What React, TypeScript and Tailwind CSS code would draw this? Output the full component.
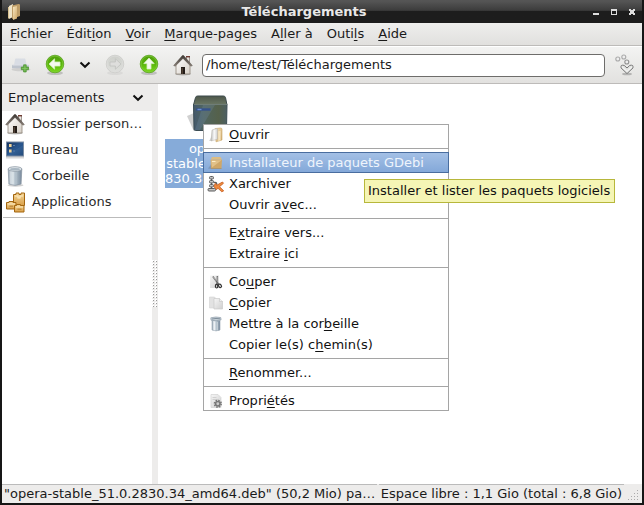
import type { ReactNode } from 'react'
import { useState } from 'react'

interface MenuEntry {
  label: string
  // index of the underlined mnemonic letter, -1 for none
  key: number
  icon?: ReactNode
  active?: boolean
}

function Mnemonic({ label, at }: { label: string; at: number }) {
  if (at < 0) return <>{label}</>
  return (
    <>
      {label.slice(0, at)}
      <span className="underline decoration-1 underline-offset-2">{label[at]}</span>
      {label.slice(at + 1)}
    </>
  )
}

function Gradients() {
  return (
    <svg width="0" height="0" className="absolute" aria-hidden="true">
      <defs>
        <linearGradient id="green" x1="0" y1="0" x2="0" y2="1">
          <stop offset="0" stopColor="#4d9c0c" />
          <stop offset="0.5" stopColor="#59b50a" />
          <stop offset="1" stopColor="#7cdb1c" />
        </linearGradient>
        <linearGradient id="grey" x1="0" y1="0" x2="0" y2="1">
          <stop offset="0" stopColor="#cdcfca" />
          <stop offset="1" stopColor="#dfe0dd" />
        </linearGradient>
        <linearGradient id="wall" x1="0" y1="0" x2="1" y2="1">
          <stop offset="0" stopColor="#ffffff" />
          <stop offset="1" stopColor="#d6cfc6" />
        </linearGradient>
        <linearGradient id="roof" x1="0" y1="0" x2="0" y2="1">
          <stop offset="0" stopColor="#3c3733" />
          <stop offset="1" stopColor="#8a8078" />
        </linearGradient>
        <linearGradient id="screen" x1="0" y1="0" x2="1" y2="1">
          <stop offset="0" stopColor="#16335f" />
          <stop offset="0.5" stopColor="#29578f" />
          <stop offset="1" stopColor="#183e70" />
        </linearGradient>
        <linearGradient id="metal" x1="0" y1="0" x2="1" y2="0">
          <stop offset="0" stopColor="#8e9dab" />
          <stop offset="0.25" stopColor="#eef3f6" />
          <stop offset="0.55" stopColor="#b9c6d0" />
          <stop offset="0.8" stopColor="#93a3b1" />
          <stop offset="1" stopColor="#76869a" />
        </linearGradient>
        <linearGradient id="tan" x1="0" y1="0" x2="1" y2="1">
          <stop offset="0" stopColor="#f7e6c0" />
          <stop offset="1" stopColor="#cfa868" />
        </linearGradient>
        <linearGradient id="orange" x1="0" y1="0" x2="0" y2="1">
          <stop offset="0" stopColor="#f3d596" />
          <stop offset="1" stopColor="#d9a04a" />
        </linearGradient>
        <linearGradient id="paper" x1="0" y1="0" x2="1" y2="1">
          <stop offset="0" stopColor="#f6f6f6" />
          <stop offset="1" stopColor="#cfcfcf" />
        </linearGradient>
        <linearGradient id="sheet" x1="0" y1="0" x2="1" y2="0">
          <stop offset="0" stopColor="#b9b9b9" />
          <stop offset="0.5" stopColor="#fafafa" />
          <stop offset="1" stopColor="#cfcfcf" />
        </linearGradient>
        <linearGradient id="boxFront" x1="0" y1="0" x2="1" y2="0">
          <stop offset="0" stopColor="#44596d" />
          <stop offset="0.3" stopColor="#50655f" />
          <stop offset="0.75" stopColor="#55614b" />
          <stop offset="1" stopColor="#4c5f62" />
        </linearGradient>
        <linearGradient id="boxLid" x1="0" y1="0" x2="0" y2="1">
          <stop offset="0" stopColor="#4d564a" />
          <stop offset="1" stopColor="#6b7864" />
        </linearGradient>
      </defs>
    </svg>
  )
}

function FolderIcon() {
  return (
    <svg width="16" height="16" viewBox="0 0 16 16" aria-hidden="true">
      <path d="M1 14 4 9v5z" fill="#999" opacity="0.4" />
      <path d="M7 1.6 12.6 1q1.4 0 1.4 1.2V13l-6 1.8z" fill="url(#tan)" stroke="#c7a468" strokeWidth="0.6" />
      <path d="M4 3 8.5 1.6q1-.2 1 .8v9.8L3 14z" fill="url(#sheet)" stroke="#b7b3ab" strokeWidth="0.5" />
      <path d="M10.2 4.2 12.6 3.8v9.4l-2.4.8z" fill="#f6e4bf" />
    </svg>
  )
}

function TitleFolderIcon() {
  return (
    <svg width="16" height="18" viewBox="0 0 16 18" aria-hidden="true">
      <path d="M3 3 7 1v13l-4 2z" fill="#efe4c9" />
      <path d="M6 2.5 12.5 1q1.500 0 1.500 1v11L6 16z" fill="#bd9c67" />
      <path d="M7 4 11 3v12.5L7 17z" fill="url(#tan)" />
      <path d="M2.5 4v11.5" stroke="#d8c291" />
    </svg>
  )
}

function RoundArrow({ dir, disabled }: { dir: 'left' | 'right' | 'up'; disabled?: boolean }) {
  const turn = { left: 0, up: 90, right: 180 }[dir]
  return (
    <svg width="20" height="22" viewBox="0 0 20 22" aria-hidden="true">
      <ellipse cx="10" cy="19" rx="8" ry="2" fill="#777" opacity={disabled ? 0.1 : 0.35} />
      <circle cx="10" cy="10" r="8.8" fill={disabled ? 'url(#grey)' : 'url(#green)'} stroke={disabled ? '#cbccc9' : '#5aa31f'} strokeWidth="0.8" />
      <circle cx="10" cy="10" r="7.9" fill="none" stroke={disabled ? '#dcdddb' : '#7fcb3a'} strokeWidth="0.7" />
      <path
        d="M4 10 9.6 4.800v3.200h5.400v4H9.600v3.200z"
        transform={`rotate(${turn} 10 10)`}
        fill={disabled ? '#dededc' : '#f4f9ef'}
        stroke={disabled ? '#c0c1be' : '#d8efc0'}
        strokeWidth="0.8"
        strokeLinejoin="round"
      />
    </svg>
  )
}

function HomeIcon() {
  return (
    <svg width="20" height="22" viewBox="0 0 20 22" aria-hidden="true">
      <ellipse cx="10" cy="20" rx="8" ry="1.4" fill="#555" opacity="0.35" />
      <path d="M13.5 2.5h3v6h-3z" fill="#e9e4df" stroke="#7e746b" strokeWidth="0.7" />
      <path d="M13 2h4v1.4h-4z" fill="#6e3b32" />
      <path d="M3 10.5 10 3.5l7 7V20H3z" fill="url(#wall)" stroke="#8f857a" strokeWidth="0.8" />
      <path d="M0.6 11.6 9.3 1.6q.7-.7 1.4 0l8.7 10-1.6.6L10 4.4 2.2 12.2z" fill="url(#roof)" stroke="#5a534d" strokeWidth="0.4" />
      <path d="M8 13h4v7H8z" fill="#231c17" />
      <path d="M8.6 14h1.200v6H8.600z" fill="#5b4a3c" />
    </svg>
  )
}

function NewTabIcon() {
  return (
    <svg width="20" height="16" viewBox="0 0 20 16" aria-hidden="true">
      <ellipse cx="10" cy="12.5" rx="9.5" ry="1.8" fill="#999" opacity="0.3" />
      <path d="M4 2.500q0-1 1-1h8.500q1 0 1 1L15.500 8H3z" fill="#d9dde4" />
      <path d="M1 8.500q0-.8.800-.8h15.400q.8 0 .8.800v2.800H1z" fill="#bec4cd" />
      <path d="M1.500 8h16" stroke="#e8ebef" strokeWidth="0.8" />
      <path d="M12.600 7.800h2.600v2.300h2.300v2.600h-2.300V15h-2.600v-2.300h-2.300v-2.600h2.300z" fill="#62ad42" stroke="#4a9330" strokeWidth="0.7" />
      <path d="M13.900 8.600v5.600M11.100 11.400h5.600" stroke="#8fcb70" strokeWidth="0.7" />
    </svg>
  )
}

function Chevron() {
  return (
    <svg width="12" height="8" viewBox="0 0 12 8" aria-hidden="true">
      <path d="M1.5 1.5 6 5.8l4.500-4.300" fill="none" stroke="#111" strokeWidth="2" />
    </svg>
  )
}

function GoIcon() {
  return (
    <svg width="20" height="22" viewBox="0 0 20 22" aria-hidden="true">
      <ellipse cx="13" cy="20" rx="5" ry="1.300" fill="#777" opacity="0.45" />
      <g fill="#eee" stroke="#aaa" strokeWidth="1.1">
        <circle cx="3.800" cy="5" r="2" />
        <circle cx="9.800" cy="3" r="2" />
        <circle cx="12.800" cy="8" r="2" stroke="#929292" />
      </g>
      <path d="M7 12.500q0-1.300 1.500-1.300l1.700.2L13 14l2.800-2.600 1.700-.2q1.500 0 1.500 1.300v1.400L13 19.600 7 13.900z" fill="#e3e4e2" stroke="#777" strokeWidth="1" />
      <path d="m8.200 13 4.800 4.400 4.800-4.400" fill="none" stroke="#fff" strokeWidth="0.8" />
    </svg>
  )
}

function DesktopIcon() {
  return (
    <svg width="20" height="18" viewBox="0 0 20 18" aria-hidden="true">
      <path d="M1 15h18v2.500H1z" fill="#999" opacity="0.4" />
      <path d="M1 .5h18v15H1z" fill="#7c8da3" />
      <path d="M2 1.500h16v13H2z" fill="url(#screen)" />
      <path d="M2 14.500 18 4v10.500z" fill="#7ba6d3" opacity="0.15" />
      <path d="M4 3h2.600v3H4zM4 8.500h2.600v3H4z" fill="#efd397" />
      <path d="M8 4.500h2M8 10h2" stroke="#5d7fa8" />
    </svg>
  )
}

function TrashIcon() {
  return (
    <svg width="18" height="21" viewBox="0 0 18 21" aria-hidden="true">
      <ellipse cx="9.500" cy="19.200" rx="8" ry="1.500" fill="#777" opacity="0.35" />
      <path d="M2.200 3 2.900 18q6.100 2.800 12.200 0l.7-15z" fill="url(#metal)" stroke="#8694a0" strokeWidth="0.7" />
      <path d="M5.800 5.500V18M9 6v13M12.200 5.500V18" stroke="#8fa0ae" strokeWidth="0.5" opacity="0.7" />
      <ellipse cx="9" cy="3" rx="6.900" ry="2.300" fill="#e3e9ed" stroke="#7f8d99" strokeWidth="0.7" />
      <ellipse cx="9" cy="3.200" rx="5" ry="1.300" fill="#a9b7c2" />
    </svg>
  )
}

function SmallTrashIcon() {
  return (
    <svg width="16" height="16" viewBox="0 0 16 16" aria-hidden="true">
      <path d="M4 4.500V14q4 1.800 8 0V4.500z" fill="url(#metal)" stroke="#96a3ae" strokeWidth="0.6" />
      <path d="M6.500 6v8.500M9.500 6v8.500" stroke="#fff" strokeWidth="0.700" opacity="0.5" />
      <path d="M2.800 1.800Q8 .2 12.800 1.600l.3 2.300Q8 5.600 3 4.200z" fill="#c6d0d8" stroke="#8594a1" strokeWidth="0.600" />
      <path d="M4 3q4-1 8-.2" stroke="#6f7f8d" fill="none" strokeWidth="0.800" />
    </svg>
  )
}

function AppsIcon() {
  return (
    <svg width="21" height="21" viewBox="0 0 21 21" aria-hidden="true">
      <g fill="url(#orange)" stroke="#a4660f" strokeWidth="1" strokeLinejoin="round">
        <path d="M8.500 2.500h2.500V1h3v1.500h2V1h3.500v12.500h-11z" />
        <path d="M1.500 10.500H4V9.500h4v1H11V17H1.500z" />
        <path d="M9.500 13.500h2v-1h4v1h3.500v6.500h-9.500z" />
      </g>
      <path d="M10 4h3v2h2V4h3M3 12h7M11 15h7" fill="none" stroke="#fbe9bf" strokeWidth="1.200" />
      <path d="M4.500 14.200h3.500M12.500 17.200h4" stroke="#b0792a" strokeWidth="0.900" />
    </svg>
  )
}

function PackageSmallIcon() {
  return (
    <svg width="16" height="16" viewBox="0 0 16 16" aria-hidden="true">
      <path d="M0 13.500 3 9.500v4.500z" fill="#71819a" opacity="0.5" />
      <path d="M4 2h8.500L14 4.800H2.600z" fill="#dcbd85" />
      <path d="M2.600 4.800H14l-.5 8.700H3z" fill="#cfa768" />
      <path d="M3 5.500 13.500 5.200 4 12.500z" fill="#e9cc96" opacity="0.7" />
      <path d="M4 6.400h3.500" stroke="#fff2cf" />
      <path d="M3 13.500h10.500" stroke="#a98650" strokeWidth="0.600" />
    </svg>
  )
}

function ArchiverIcon() {
  return (
    <svg width="18" height="18" viewBox="0 0 18 18" aria-hidden="true">
      <g fill="#c4c4c4" stroke="#5c5c5c" strokeWidth="1">
        <rect x="2.500" y="1.500" width="4" height="2.500" rx="1" />
        <rect x="2.500" y="5.500" width="4" height="2.500" rx="1" />
        <rect x="2.500" y="9.500" width="4" height="2.500" rx="1" />
        <rect x="1" y="13.500" width="7.500" height="2.500" rx="1" />
        <path d="M4.500 4v1.500M4.500 8v1.500M4.500 12v1.500" />
        <path d="M6.800 7.500q3-.8 3 2" fill="none" strokeWidth="1.300" />
      </g>
      <path d="M8 8.500q1.500 0 1.600 1.800L15.500 7l1 1.300-4 3.400 4.200 4.100-1.900 1-4-3.700-1.200 1.600-2.600-3z" fill="#ee8a3e" stroke="#c4591c" strokeWidth="0.800" strokeLinejoin="round" />
    </svg>
  )
}

function CutIcon() {
  return (
    <svg width="16" height="16" viewBox="0 0 16 16" aria-hidden="true">
      <path d="M2 1.500h9v12.500H2z" fill="url(#paper)" />
      <path d="M4.800 2.500 10.800 10.500M9.300 2 8.800 10.500" stroke="#6c6c6c" strokeWidth="1.300" />
      <path d="m5.300 3 3 4M9 3l-.3 3.500" stroke="#ddd" strokeWidth="0.500" />
      <ellipse cx="8.600" cy="12.200" rx="1.200" ry="1.800" fill="none" stroke="#333" strokeWidth="1.200" />
      <ellipse cx="12" cy="11.800" rx="1.300" ry="1.800" transform="rotate(-35 12 11.800)" fill="none" stroke="#333" strokeWidth="1.200" />
    </svg>
  )
}

function CopyIcon() {
  return (
    <svg width="16" height="16" viewBox="0 0 16 16" aria-hidden="true">
      <path d="M1.500 2h5l2 2v9h-7z" fill="#e2e2e2" stroke="#d3d3d3" strokeWidth="0.600" />
      <path d="M6 3.500h5.500L14.500 6.500v7.500H6z" fill="url(#paper)" stroke="#cacaca" strokeWidth="0.700" />
      <path d="M11.500 3.500v3h3" fill="#eee" stroke="#c4c4c4" strokeWidth="0.600" />
    </svg>
  )
}

function PropertiesIcon() {
  return (
    <svg width="16" height="16" viewBox="0 0 16 16" aria-hidden="true">
      <path d="M3 1.500h7l3 3v10H3z" fill="url(#paper)" stroke="#d3d3d3" strokeWidth="0.700" />
      <path d="M4.500 4.500h4M4.500 6.500h6" stroke="#d0d0d0" />
      <circle cx="9.800" cy="10.800" r="3.400" fill="none" stroke="#777" strokeWidth="1.500" strokeDasharray="1.500 1.170" />
      <circle cx="9.800" cy="10.800" r="2.200" fill="#ccc" stroke="#777" strokeWidth="1.500" />
    </svg>
  )
}

function PackageIcon() {
  return (
    <svg width="48" height="44" viewBox="0 0 48 44" aria-hidden="true">
      <path d="M1 24 8 21v18.500z" fill="#777" opacity="0.35" />
      <path d="M9.500 5.500q.4-1.500 2-1.500h26q1.600 0 2 1.500L41 13H7.500z" fill="url(#boxLid)" stroke="#3c4b4d" />
      <path d="M7.500 12.500H41l-.5 24.500q0 1.500-1.500 1.500H9.500q-1.500 0-1.500-1.500z" fill="url(#boxFront)" stroke="#3b4c53" />
      <path d="M17 13h12L14 38H9z" fill="#8aa7dd" opacity="0.16" />
      <path d="M8 12.500h33" stroke="#7c8a80" strokeWidth="0.800" />
      <path d="M10 17.500h14.500" stroke="#35528c" strokeWidth="2.400" />
      <path d="M11.500 17.500h4" stroke="#6c8fcf" strokeWidth="1.400" />
    </svg>
  )
}

const menuBar = [
  { label: 'Fichier', key: 0 },
  { label: 'Édition', key: 4 },
  { label: 'Voir', key: 0 },
  { label: 'Marque-pages', key: 0 },
  { label: 'Aller à', key: 1 },
  { label: 'Outils', key: 4 },
  { label: 'Aide', key: 0 },
]

const places = [
  { label: 'Dossier person…', icon: <HomeIcon /> },
  { label: 'Bureau', icon: <DesktopIcon /> },
  { label: 'Corbeille', icon: <TrashIcon /> },
  { label: 'Applications', icon: <AppsIcon /> },
]

const contextMenu: MenuEntry[][] = [
  [{ label: 'Ouvrir', key: 0, icon: <FolderIcon /> }],
  [
    { label: 'Installateur de paquets GDebi', key: -1, icon: <PackageSmallIcon />, active: true },
    { label: 'Xarchiver', key: -1, icon: <ArchiverIcon /> },
    { label: 'Ouvrir avec...', key: 8 },
  ],
  [
    { label: 'Extraire vers...', key: 1 },
    { label: 'Extraire ici', key: 9 },
  ],
  [
    { label: 'Couper', key: 2, icon: <CutIcon /> },
    { label: 'Copier', key: 0, icon: <CopyIcon /> },
    { label: 'Mettre à la corbeille', key: 15, icon: <SmallTrashIcon /> },
    { label: 'Copier le(s) chemin(s)', key: 14 },
  ],
  [{ label: 'Renommer...', key: 0 }],
  [{ label: 'Propriétés', key: 6, icon: <PropertiesIcon /> }],
]

function TitleBar() {
  return (
    <header className="flex h-[23px] shrink-0 items-center bg-linear-to-b from-[#555] from-5% via-[#3c3c3c] via-45% to-[#1d1d1d] to-50% px-1">
      <div className="flex w-4 shrink-0">
        <TitleFolderIcon />
      </div>
      <h1 className="mr-1 min-w-0 flex-1 truncate text-center text-[13px] leading-5 font-bold text-[#e8e8e8]">Téléchargements</h1>
      <div className="flex w-12 shrink-0 justify-between">
        <button aria-label="Réduire" className="flex w-3 justify-center">
          <svg width="6" height="7" viewBox="0 0 6 7"><path d="M0 5h6v2H0z" fill="#ddd" /></svg>
        </button>
        <button aria-label="Agrandir" className="flex w-3 justify-center">
          <svg width="6" height="7" viewBox="0 0 6 7"><path d="M0 1h6v6H0zM1 3v3h4V3z" fill="#ddd" fillRule="evenodd" /></svg>
        </button>
        <button aria-label="Fermer" className="flex w-3 justify-center">
          <svg width="6" height="7" viewBox="0 0 6 7"><path d="M0 1h2v1h2V1h2v2H5v2h1v2H4V6H2v1H0V5h1V3H0z" fill="#ddd" /></svg>
        </button>
      </div>
    </header>
  )
}

function Toolbar() {
  const [path, setPath] = useState('/home/test/Téléchargements')
  const button = 'flex h-full w-[34px] shrink-0 items-center justify-center'
  return (
    <div className="flex h-[38px] shrink-0 items-center border-t border-b border-t-white border-b-[#bdbbb9] bg-linear-to-b from-[#f3f3f2] to-[#e2e1df] pl-0.5">
      <button aria-label="Nouvel onglet" className={button}><NewTabIcon /></button>
      <button aria-label="Précédent" className={button}><RoundArrow dir="left" /></button>
      <button aria-label="Historique" className="flex h-full w-[26px] shrink-0 items-center justify-center"><Chevron /></button>
      <button aria-label="Suivant" className={button} disabled><RoundArrow dir="right" disabled /></button>
      <button aria-label="Dossier parent" className={button}><RoundArrow dir="up" /></button>
      <button aria-label="Dossier personnel" className={button}><HomeIcon /></button>
      <input
        aria-label="Chemin"
        value={path}
        onChange={e => setPath(e.target.value)}
        className="ml-0.5 h-[23px] min-w-0 flex-1 rounded border border-[#6e6d6b] bg-white px-[3px] pb-px text-[13px] text-[#1a1a1a] outline-none"
      />
      <button aria-label="Aller" className="flex h-full w-[37px] shrink-0 items-center justify-center"><GoIcon /></button>
    </div>
  )
}

function Sidebar() {
  return (
    <aside className="flex w-[150px] shrink-0 flex-col bg-white">
      <button className="flex h-[27px] shrink-0 items-center justify-between bg-[#edeceb] pr-2 pl-1.5">
        Emplacements
        <Chevron />
      </button>
      <ul className="mx-px border-b border-[#bbb] pb-0.5">
        {places.map(p => (
          <li key={p.label}>
            <a href="#" className="flex h-[26px] items-center gap-1.5 pl-px text-[#2b2b2b]">
              <span className="flex w-[22px] shrink-0 justify-center">{p.icon}</span>
              <span className="whitespace-nowrap">{p.label}</span>
            </a>
          </li>
        ))}
      </ul>
    </aside>
  )
}

function PaneHandle() {
  return (
    <div className="flex w-1.5 shrink-0 items-center justify-center bg-[#edeceb]">
      <svg width="6" height="48" viewBox="0 0 6 48" aria-hidden="true">
        {Array.from({ length: 16 }, (_, i) => (
          <g key={i}>
            <path d={`M0 ${i * 3}h2v2h-2zM3 ${i * 3}h2v2h-2z`} fill="#fff" />
            <path d={`M1 ${i * 3 + 1}h1v1h-1zM4 ${i * 3 + 1}h1v1h-1z`} fill="#999" />
          </g>
        ))}
      </svg>
    </div>
  )
}

function ContextMenu() {
  return (
    <div role="menu" className="absolute top-10 left-[45px] w-[246px] bg-white shadow-[inset_0_0_0_1px_#a5a5a5]">
      {contextMenu.map((group, i) => (
        <div key={i} role="group">
          {i > 0 && <div className="py-[3px]"><div className="h-px bg-[#a5a5a5]" /></div>}
          {group.map(item => (
            <button
              key={item.label}
              role="menuitem"
              className={`flex h-[21px] w-full items-center gap-1 pl-1 text-left ${
                item.active
                  ? 'bg-linear-to-b from-[#a5c1e6] to-[#82a7d8] text-[#eef4fc] shadow-[inset_0_0_0_1px_#496d9f]'
                  : 'text-[#111]'
              }`}
            >
              <span className="flex w-[18px] shrink-0 justify-center">{item.icon}</span>
              <span><Mnemonic label={item.label} at={item.key} /></span>
            </button>
          ))}
        </div>
      ))}
    </div>
  )
}

function FileView() {
  return (
    <main className="relative min-w-0 flex-1 bg-white">
      <div className="flex w-[104px] flex-col items-center pt-2">
        <div className="flex h-[47px] items-start">
          <PackageIcon />
        </div>
        <p className="w-[90px] bg-[#86abd9] py-0.5 text-center leading-[15px] text-white">
          opera-<br />stable_51.0.2<br />830.34_amd...
        </p>
      </div>
      <ContextMenu />
      <div role="tooltip" className="absolute top-[95px] left-[206px] border border-[#b7b73b] bg-[#f5f5b5] py-px pr-1 pl-[3px] leading-5 whitespace-nowrap text-[#111]">
        Installer et lister les paquets logiciels
      </div>
    </main>
  )
}

function StatusBar() {
  return (
    <footer className="flex h-[19px] shrink-0 items-stretch gap-0.5 bg-[#edeceb]">
      <p className="min-w-0 flex-1 overflow-hidden border-t border-[#bbb] pl-0.5 leading-[18px] whitespace-nowrap">
        "opera-stable_51.0.2830.34_amd64.deb" (50,2 Mio) pa…
      </p>
      <p className="shrink-0 border-t border-[#bbb] px-0.5 leading-[18px]">Espace libre : 1,1 Gio (total : 6,8 Gio)</p>
      <div className="flex w-4 shrink-0 items-end">
        <svg width="14" height="14" viewBox="0 0 14 14" aria-hidden="true">
          <path d="M11 1h1v1h-1zM8 4h1v1H8zM11 4h1v1h-1zM5 7h1v1H5zM8 7h1v1H8zM11 7h1v1h-1zM2 10h1v1H2zM5 10h1v1H5zM8 10h1v1H8zM11 10h1v1h-1z" fill="#aaa" />
        </svg>
      </div>
    </footer>
  )
}

export default function App() {
  return (
    <div className="flex h-screen flex-col border-x-2 border-b-2 border-[#161616] bg-[#edeceb] font-['DejaVu_Sans',sans-serif] text-[13px] text-[#1a1a1a]">
      <Gradients />
      <TitleBar />
      <nav className="flex h-[23px] shrink-0 items-center border-b border-[#bdbbb9] bg-linear-to-b from-[#eeeeed] to-[#e1e0de] pl-px">
        {menuBar.map(m => (
          <button key={m.label} className="px-[7px] whitespace-nowrap">
            <Mnemonic label={m.label} at={m.key} />
          </button>
        ))}
      </nav>
      <Toolbar />
      <div className="flex min-h-0 flex-1">
        <Sidebar />
        <PaneHandle />
        <FileView />
      </div>
      <StatusBar />
    </div>
  )
}
